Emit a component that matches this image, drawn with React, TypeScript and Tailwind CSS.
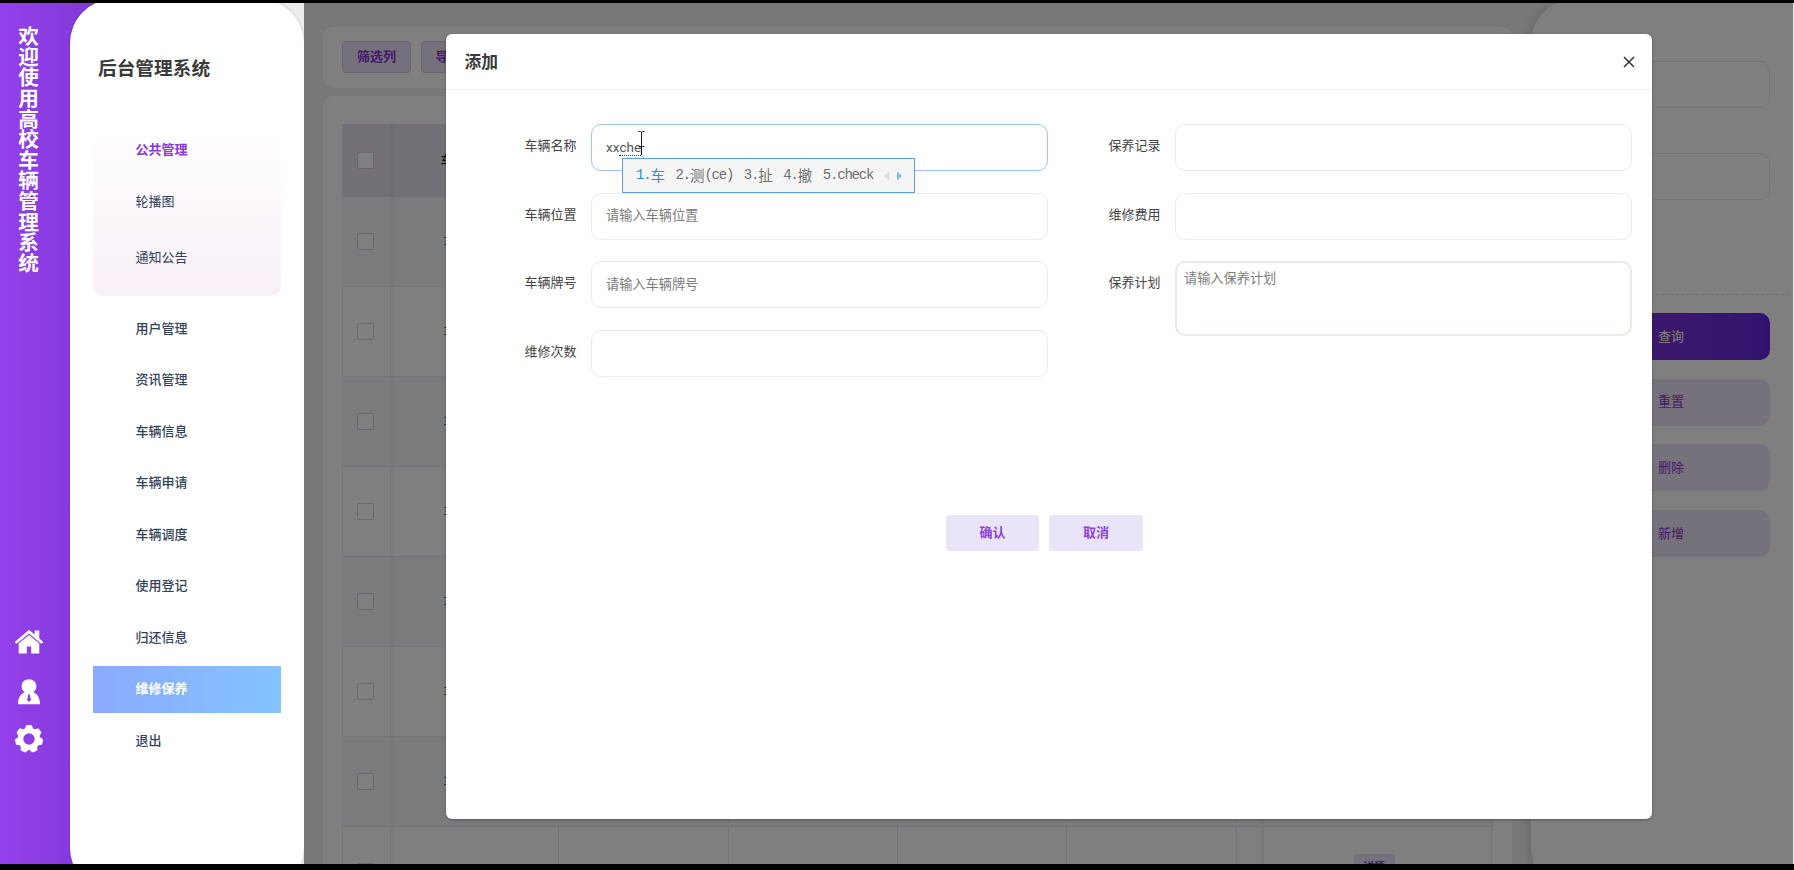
import React from 'react';

const menuItems = [
  '用户管理',
  '资讯管理',
  '车辆信息',
  '车辆申请',
  '车辆调度',
  '使用登记',
  '归还信息',
  '维修保养',
  '退出',
];

const leftFields = [
  { id: 'name', label: '车辆名称', placeholder: '' },
  { id: 'position', label: '车辆位置', placeholder: '请输入车辆位置' },
  { id: 'plate', label: '车辆牌号', placeholder: '请输入车辆牌号' },
  { id: 'times', label: '维修次数', placeholder: '' },
];

const candidates = [
  { num: '1.', han: '车', latin: '' },
  { num: '2.', han: '测', latin: '(ce)' },
  { num: '3.', han: '扯', latin: '' },
  { num: '4.', han: '撤', latin: '' },
  { num: '5.', han: '', latin: 'check' },
];

const rows = [1, 2, 3, 4, 5, 6, 7, 8];

const gridCols =
  'grid grid-cols-[46.5px_168.5px_170px_169px_169px_170px_27px_229px]';

function HomeIcon() {
  return (
    <svg width="28" height="24" viewBox="0 0 28 24" fill="white">
      <path d="M12.6 0.9 Q14 -0.2 15.4 0.9 L19.6 4.4 V0.6 H24.3 V8.4 L27.5 11.2 Q28.3 12.2 27.4 13.2 Q26.6 14 25.7 13.2 L14 3.4 L2.3 13.2 Q1.4 14 0.6 13.2 Q-0.3 12.2 0.5 11.2Z" />
      <path d="M14 4.9 L24.3 13.6 V23.5 H16.2 V16.6 H11.8 V23.5 H3.7 V13.6Z" />
    </svg>
  );
}

function UserIcon() {
  return (
    <svg width="22" height="26" viewBox="0 0 22 26" fill="white">
      <path
        fillRule="evenodd"
        d="M11 0.3 C15.4 0.3 18.4 3.4 18.4 7.2 C18.4 10 17 12 15.3 13.3 C19.2 14.8 22 18.6 22 25.2 H0 C0 18.6 2.8 14.8 6.7 13.3 C5 12 3.6 10 3.6 7.2 C3.6 3.4 6.6 0.3 11 0.3Z M11 14.6 L10.2 16 L9 21 L11 23 L13 21 L11.8 16Z"
      />
    </svg>
  );
}

function GearIcon() {
  const teeth = [0, 51.43, 102.86, 154.29, 205.71, 257.14, 308.57];
  return (
    <svg width="28" height="28" viewBox="-14 -14 28 28">
      <circle r="8.4" fill="none" stroke="white" strokeWidth="5.4" />
      {teeth.map(a => (
        <path
          key={a}
          d="M-5.4 -9.4 Q-3.8 -10.2 -3.4 -12.2 Q-3.2 -13.9 -1.9 -13.9 H1.9 Q3.2 -13.9 3.4 -12.2 Q3.8 -10.2 5.4 -9.4Z"
          fill="white"
          transform={`rotate(${a})`}
        />
      ))}
    </svg>
  );
}

function Rail() {
  return (
    <div className="flex w-[110px] shrink-0 flex-col bg-linear-to-r from-[#9440ea] to-[#7d38d8]">
      <div className="flex h-full w-[57px] flex-col items-center">
        <h1 className="mt-[23px] mr-[4px] h-[250px] text-[20.6px] leading-[22px] font-bold whitespace-nowrap text-white [writing-mode:vertical-rl]">
          欢迎使用高校车辆管理系统
        </h1>
        <div className="mt-[354px] flex flex-col items-center">
          <HomeIcon />
          <div className="mt-[25px]">
            <UserIcon />
          </div>
          <div className="mt-5">
            <GearIcon />
          </div>
        </div>
      </div>
    </div>
  );
}

function Sidebar() {
  return (
    <aside className="-mt-1 -ml-10 h-[893px] w-[234px] shrink-0 rounded-[44px] bg-white px-[23px] shadow-[0_0_2px_rgba(0,0,0,0.25)]">
      <h2 className="mt-[56px] pl-[5px] text-[18.7px] leading-[28px] font-bold text-[#3a3a3a]">
        后台管理系统
      </h2>
      <nav className="mt-[44px] text-[13px] text-[#34435a]">
        <div className="h-[169px] rounded-[10px] bg-linear-to-b from-white to-[#f9eff8] pl-[42.5px]">
          <div className="flex h-[46px] items-center font-bold text-[#8a35d8]">公共管理</div>
          <div className="flex h-[57px] items-center">轮播图</div>
          <div className="flex h-[56px] items-center">通知公告</div>
        </div>
        <ul className="mt-[9px] flex flex-col gap-[4.5px] font-medium">
          {menuItems.map(item => (
            <li
              key={item}
              className={
                item === '维修保养'
                  ? 'flex h-[47px] items-center bg-linear-to-r from-[#8aa9ff] to-[#84c4ff] pl-[42.5px] font-bold text-white'
                  : 'flex h-[47px] items-center pl-[42.5px]'
              }
            >
              {item}
            </li>
          ))}
        </ul>
      </nav>
    </aside>
  );
}

function Checkbox() {
  return <span className="h-[17px] w-[17px] rounded-[2px] border border-[#d2d4da] bg-white" />;
}

function DataTable() {
  return (
    <div className="h-[800px] rounded-[10px] bg-white px-[19px] pt-[28px]">
      <div className="border-l border-[#ebeef5] text-[13px] text-[#333]">
        <div className={`${gridCols} h-[73px] bg-[#e6e0f0]`}>
          <div className="flex items-center pl-[14px]">
            <Checkbox />
          </div>
          <div className="flex items-center border-l border-[#d9d4e4] pl-[50px] font-medium shadow-[inset_3px_0_3px_rgba(0,0,0,0.04)]">
            车辆名称
          </div>
        </div>
        {rows.map(row => (
          <div
            key={row}
            className={`${gridCols} h-[90px] border-b border-[#e9ebf2] ${row % 2 === 1 ? 'bg-[#f5f7fa]' : ''}`}
          >
            <div className="flex items-center pl-[14px]">
              <Checkbox />
            </div>
            <div className="flex items-center border-l border-[#e9ebf2] pl-[53px] shadow-[inset_3px_0_3px_rgba(0,0,0,0.04)]">
              {/* the last row is scrolled half out of view */}
              {row < 8 && `车辆名称${row}`}
            </div>
            <div className="border-l border-[#e9ebf2]" />
            <div className="border-l border-[#e9ebf2]" />
            <div className="border-l border-[#e9ebf2]" />
            <div className="border-l border-[#e9ebf2]" />
            <div className="border-l border-[#e9ebf2] shadow-[inset_-4px_0_4px_rgba(0,0,0,0.05)]" />
            <div className="flex justify-center border-x border-[#e9ebf2] pt-[27px] pr-[7px]">
              <span className="h-[32px] w-[41px] rounded-[3px] bg-[#e9e3f8] text-center text-[11px] leading-[26px] font-bold text-[#6b3fae]">
                详情
              </span>
            </div>
          </div>
        ))}
      </div>
    </div>
  );
}

function SearchPanel() {
  const buttons = ['重置', '删除', '新增'];
  return (
    <div className="-mt-1 h-[893px] w-[262px] shrink-0 rounded-tl-[44px] rounded-bl-[44px] bg-white pt-[62px] shadow-[-3px_0_8px_rgba(0,0,0,0.12)]">
      <div className="mr-[23px] ml-[41px] h-[47px] rounded-[10px] border border-[#e8ecf0]" />
      <div className="mt-[45px] mr-[23px] ml-[41px] h-[47px] rounded-[10px] border border-[#e8ecf0]" />
      <div className="mt-[94px] mr-1 border-t border-dashed border-[#eaebee]" />
      <div className="mt-[18px] mr-[23px] ml-[41px] flex flex-col gap-[18.6px] text-[13px]">
        <button className="h-[47px] rounded-[10px] bg-linear-to-r from-[#8a35d8] to-[#6226de] text-white">
          查询
        </button>
        {buttons.map(text => (
          <button key={text} className="h-[47px] rounded-[10px] bg-[#eae4f9] text-[#8a35d8]">
            {text}
          </button>
        ))}
      </div>
    </div>
  );
}

function Candidates() {
  return (
    <div className="absolute top-[33px] left-[30px] z-10 flex h-[35px] w-[293px] items-center gap-[10.6px] border-[1.5px] border-[#599ce0] bg-[#f5f5f5] pl-[13px] font-['Liberation_Mono','Noto_Sans_CJK_SC',monospace] text-[14px] tracking-[-1.2px] text-[#707070]">
      {candidates.map((c, i) => (
        <span
          key={c.num}
          className={i === 0 ? 'flex items-center text-[#2f8be0]' : 'flex items-center'}
        >
          {c.num}
          {c.han && (
            <span className="-mt-0.5 font-['Noto_Sans_CJK_SC',sans-serif] text-[14.5px] leading-5 tracking-normal">
              {c.han}
            </span>
          )}
          {c.latin}
        </span>
      ))}
      <span className="flex items-center gap-2">
        <svg width="5" height="10" viewBox="0 0 5 10">
          <path d="M5 0.5V9.5L0 5Z" fill="#dcdcdc" />
        </svg>
        <svg width="5" height="10" viewBox="0 0 5 10">
          <path d="M0 0.5V9.5L5 5Z" fill="#80b8f4" />
        </svg>
      </span>
    </div>
  );
}

function NameInput() {
  return (
    <div className="relative flex h-[47px] w-[456.5px] items-center rounded-[10px] border border-[#9fc2f2] pl-[14px] font-['Roboto',sans-serif] text-[13.5px] text-[#555]">
      <span>xx</span>
      <span className="border-b border-dotted border-[#333] leading-[15px]">che</span>
      <span className="h-[15px] w-px bg-black" />
      {/* mouse pointer over the text */}
      <svg className="absolute top-[6px] left-[46px]" width="7" height="16" viewBox="0 0 7 16">
        <path d="M0.5 0.5H2.6L3.5 1.2L4.4 0.5H6.5M3.5 1V15M0.5 15.5H2.6L3.5 14.8L4.4 15.5H6.5" fill="none" stroke="#222" />
      </svg>
      <Candidates />
    </div>
  );
}

function AddDialog() {
  return (
    <div className="absolute top-[31px] left-[142px] flex h-[785px] w-[1205.5px] flex-col rounded-[6px] bg-white shadow-[0_1px_3px_rgba(0,0,0,0.3)]">
      <header className="flex h-[56px] shrink-0 items-center justify-between border-b border-[#eee] pr-[17px] pl-[18.5px]">
        <h3 className="pt-[2px] text-[16.8px] font-bold text-[#3a3a3a]">添加</h3>
        <svg width="12" height="12" viewBox="0 0 12 12">
          <path d="M1 1L11 11M11 1L1 11" stroke="#333344" strokeWidth="1.5" />
        </svg>
      </header>
      <div className="flex justify-between pt-[34px] pr-[20px] pl-[78.5px] text-[13px] text-[#444]">
        <div className="flex flex-col gap-[21.5px]">
          {leftFields.map(field => (
            <div key={field.id} className="flex">
              <label className="w-[66.5px] pt-[12px] leading-5">{field.label}</label>
              {field.id === 'name' ? (
                <NameInput />
              ) : (
                <div className="flex h-[47px] w-[456.5px] items-center rounded-[10px] border border-[#e8ebf0] pl-[14px] text-[13.2px] text-[#7c7c7c]">
                  {field.placeholder}
                </div>
              )}
            </div>
          ))}
        </div>
        <div className="flex flex-col gap-[21.5px]">
          <div className="flex">
            <label className="w-[66.5px] pt-[12px] leading-5">保养记录</label>
            <div className="h-[47px] w-[456.5px] rounded-[10px] border border-[#e8ecee]" />
          </div>
          <div className="flex">
            <label className="w-[66.5px] pt-[12px] leading-5">维修费用</label>
            <div className="h-[47px] w-[456.5px] rounded-[10px] border border-[#e8ecf0]" />
          </div>
          <div className="flex">
            <label className="w-[66.5px] pt-[12px] leading-5">保养计划</label>
            <div className="h-[75px] w-[456.5px] rounded-[10px] border-2 border-[#e6e9ef] px-[7px] pt-[6px] text-[13.2px] leading-5 text-[#7c7c7c]">
              请输入保养计划
            </div>
          </div>
        </div>
      </div>
      <div className="mt-[138.5px] flex justify-center gap-[10px] pr-[9px]">
        <button className="h-[36px] w-[93.5px] rounded-[4px] bg-[#eae4f9] text-[13px] font-bold text-[#8d42d8]">
          确认
        </button>
        <button className="h-[36px] w-[93.5px] rounded-[4px] bg-[#eae4f9] text-[13px] font-bold text-[#8d42d8]">
          取消
        </button>
      </div>
    </div>
  );
}

export default function App() {
  return (
    <div className="flex h-[870px] w-[1794px] flex-col overflow-hidden bg-black font-['Liberation_Sans','Noto_Sans_CJK_SC',sans-serif]">
      <div className="mt-[3px] flex h-[861px] overflow-hidden bg-[#ececec]">
        <Rail />
        <Sidebar />
        <main className="relative flex h-[861px] w-[1489px] shrink-0 overflow-hidden bg-[#f0f0f0]">
          <div className="ml-[19px] w-[1189px] shrink-0 pt-[24px]">
            <div className="flex h-[61px] gap-[10px] rounded-[10px] bg-white px-[19px] pt-[14px] text-[13px] font-bold text-[#8a35d8]">
              <button className="h-[32px] w-[69px] rounded-[4px] border border-[#d3cde2] bg-[#e9e3f8]">
                筛选列
              </button>
              <button className="h-[32px] w-[55px] rounded-[4px] border border-[#d3cde2] bg-[#e9e3f8]">
                导出
              </button>
            </div>
            <div className="mt-[8px]">
              <DataTable />
            </div>
          </div>
          <div className="w-[19px] shrink-0" />
          <SearchPanel />
          <div className="absolute inset-0 bg-black/50" />
          <AddDialog />
        </main>
        <div className="w-px bg-[#e8e8e8]" />
      </div>
    </div>
  );
}
